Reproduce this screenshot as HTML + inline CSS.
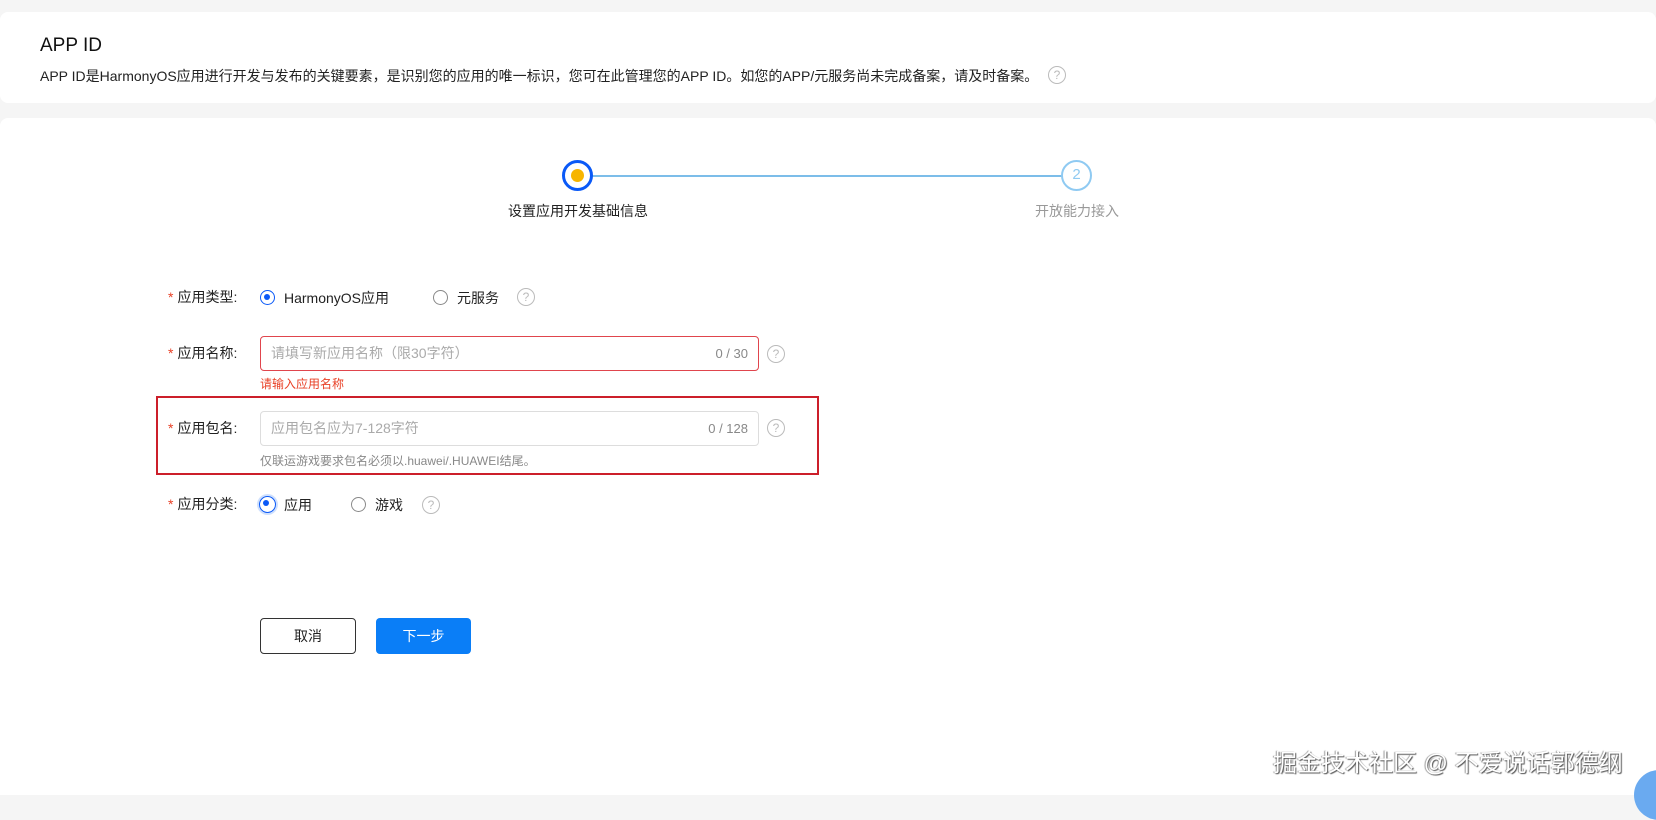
<!DOCTYPE html>
<html><head><meta charset="utf-8"><style>
*{box-sizing:border-box;margin:0;padding:0}
body{width:1656px;height:795px;background:#f5f5f5;font-family:"Liberation Sans","Noto Sans CJK SC",sans-serif;position:relative;overflow:hidden;color:#222}
.card1{position:absolute;left:0;top:12px;width:1656px;height:91px;background:#fff;border-radius:8px}
.card2{position:absolute;left:0;top:118px;width:1656px;height:677px;background:#fff;border-radius:8px 8px 0 0}
.abs{position:absolute;white-space:nowrap}
.q{position:absolute;width:18px;height:18px;border:1.3px solid #bbb;border-radius:50%;color:#bbb;font-size:12px;text-align:center;line-height:16px}
.radio{position:absolute;width:15px;height:15px;border:1px solid #888;border-radius:50%}
.radio.on{border:1.5px solid #0a59f7}
.radio.on::after{content:"";position:absolute;left:3px;top:3px;width:6px;height:6px;border-radius:50%;background:#0a59f7}
.lab{position:absolute;font-size:14px;color:#222}
.lab b{color:#e84026;font-weight:normal;margin-right:4px}
.inp{position:absolute;height:35px;border:1px solid #ddd;border-radius:4px;font-size:14px;color:#aaa;padding:0 10px;line-height:33px}
.inp span{position:absolute;right:10px;top:0;color:#888;font-size:13px}
</style></head><body>
<div class="card1"></div>
<div class="abs" style="left:40px;top:35px;font-size:19px;color:#111">APP ID</div>
<div class="abs" style="left:40px;top:66px;font-size:14px;color:#222">APP ID是HarmonyOS应用进行开发与发布的关键要素，是识别您的应用的唯一标识，您可在此管理您的APP ID。如您的APP/元服务尚未完成备案，请及时备案。</div>
<div class="q" style="left:1048px;top:66px">?</div>
<div class="card2"></div>
<div class="abs" style="left:578px;top:175px;width:499px;height:2px;background:#7cbde9"></div>
<div class="abs" style="left:562px;top:160px;width:31px;height:31px;border:3px solid #0a59f7;border-radius:50%;background:#fff"></div>
<div class="abs" style="left:571px;top:169px;width:13px;height:13px;border-radius:50%;background:#f7b500"></div>
<div class="abs" style="left:1061px;top:160px;width:31px;height:31px;border:2.5px solid #8fcaf2;border-radius:50%;background:#fff;color:#8fcaf2;font-size:15px;text-align:center;line-height:26px">2</div>
<div class="abs" style="left:508px;top:201px;font-size:14px;color:#222">设置应用开发基础信息</div>
<div class="abs" style="left:1035px;top:201px;font-size:14px;color:#999">开放能力接入</div>

<div class="lab" style="left:168px;top:287px"><b>*</b>应用类型:</div>
<div class="radio on" style="left:260px;top:290px"></div>
<div class="abs" style="left:284px;top:288px;font-size:14px">HarmonyOS应用</div>
<div class="radio" style="left:433px;top:290px"></div>
<div class="abs" style="left:457px;top:288px;font-size:14px">元服务</div>
<div class="q" style="left:517px;top:288px">?</div>

<div class="lab" style="left:168px;top:343px"><b>*</b>应用名称:</div>
<div class="inp" style="left:260px;top:336px;width:499px;border-color:#e0454d">请填写新应用名称（限30字符）<span>0 / 30</span></div>
<div class="q" style="left:767px;top:345px">?</div>
<div class="abs" style="left:260px;top:375px;font-size:12px;color:#e84026">请输入应用名称</div>

<div class="abs" style="left:156px;top:396px;width:663px;height:79px;border:2px solid #cc1f2a"></div>
<div class="lab" style="left:168px;top:418px"><b>*</b>应用包名:</div>
<div class="inp" style="left:260px;top:411px;width:499px">应用包名应为7-128字符<span>0 / 128</span></div>
<div class="q" style="left:767px;top:419px">?</div>
<div class="abs" style="left:260px;top:452px;font-size:12px;color:#888">仅联运游戏要求包名必须以.huawei/.HUAWEI结尾。</div>

<div class="lab" style="left:168px;top:494px"><b>*</b>应用分类:</div>
<div class="radio on" style="left:259px;top:496px;width:17px;height:17px;box-shadow:0 0 0 2px #cfe0fd"></div>
<div class="abs" style="left:284px;top:495px;font-size:14px">应用</div>
<div class="radio" style="left:351px;top:497px"></div>
<div class="abs" style="left:375px;top:495px;font-size:14px">游戏</div>
<div class="q" style="left:422px;top:496px">?</div>

<div class="abs" style="left:260px;top:618px;width:96px;height:36px;border:1px solid #333;border-radius:4px;font-size:14px;text-align:center;line-height:34px">取消</div>
<div class="abs" style="left:376px;top:618px;width:95px;height:36px;background:#0a7ef7;border-radius:4px;font-size:14px;color:#fff;text-align:center;line-height:36px">下一步</div>

<div class="abs" style="left:1273px;top:743px;font-size:24px;color:#fff;text-shadow:1px 1px 1px #555,-1px 0 1px #999">掘金技术社区 @ 不爱说话郭德纲</div>
<div class="abs" style="left:1634px;top:770px;width:50px;height:50px;border-radius:50%;background:#6aaaf0"></div>
</body></html>
